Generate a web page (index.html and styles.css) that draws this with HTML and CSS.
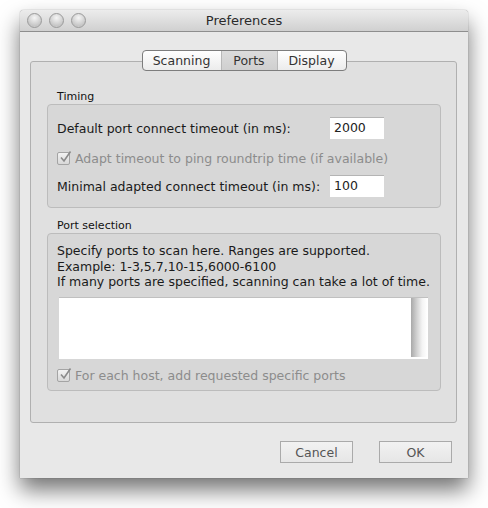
FILE: index.html
```html
<!DOCTYPE html>
<html>
<head>
<meta charset="utf-8">
<link rel="stylesheet" href="styles.css">
</head>
<body>
<div class="window">
  <div class="titlebar">
    <div class="lights">
      <span class="light"></span><span class="light"></span><span class="light"></span>
    </div>
    <div class="title">Preferences</div>
  </div>
  <div class="content">
    <div class="tabs">
      <span class="tab">Scanning</span><span class="tab active">Ports</span><span class="tab">Display</span>
    </div>
    <div class="panel">
      <div class="group-label">Timing</div>
      <div class="group timing">
        <div class="row">
          <span class="label">Default port connect timeout (in ms):</span>
          <span class="field">2000</span>
        </div>
        <div class="row check-row">
          <span class="checkbox"><svg viewBox="0 0 14 14" width="14" height="14"><path d="M3 7.5 L6 11 L12.5 1.5" fill="none" stroke="#8a8a8a" stroke-width="1.6"/></svg></span>
          <span class="dim">Adapt timeout to ping roundtrip time (if available)</span>
        </div>
        <div class="row">
          <span class="label">Minimal adapted connect timeout (in ms):</span>
          <span class="field">100</span>
        </div>
      </div>
      <div class="group-label">Port selection</div>
      <div class="group ports">
        <div class="desc">Specify ports to scan here. Ranges are supported.<br>Example: 1-3,5,7,10-15,6000-6100<br>If many ports are specified, scanning can take a lot of time.</div>
        <div class="textarea"><div class="scroll"></div></div>
        <div class="row check-row">
          <span class="checkbox"><svg viewBox="0 0 14 14" width="14" height="14"><path d="M3 7.5 L6 11 L12.5 1.5" fill="none" stroke="#8a8a8a" stroke-width="1.6"/></svg></span>
          <span class="dim">For each host, add requested specific ports</span>
        </div>
      </div>
    </div>
    <div class="buttons">
      <span class="button">Cancel</span>
      <span class="button">OK</span>
    </div>
  </div>
</div>
</body>
</html>
```
FILE: styles.css
```css
html, body {
  margin: 0;
  padding: 0;
  background: #ffffff;
}
body {
  height: 508px;
  box-sizing: border-box;
  padding: 10px 0 0 20px;
  font-family: "DejaVu Sans", "Liberation Sans", sans-serif;
  font-size: 12.5px;
  color: #1a1a1a;
}
.window {
  width: 448px;
  height: 468px;
  background: #e8e8e8;
  border-radius: 4px 4px 0 0;
  box-shadow: 0 12px 22px rgba(0,0,0,0.55), 0 0 1px rgba(0,0,0,0.6);
  display: flex;
  flex-direction: column;
}
.titlebar {
  height: 21px;
  border-bottom: 1px solid #8e8e8e;
  border-radius: 4px 4px 0 0;
  background: linear-gradient(#ececec, #d0d0d0);
  position: relative;
  display: flex;
  align-items: center;
  justify-content: center;
}
.lights {
  position: absolute;
  left: 7px;
  top: 3px;
  display: flex;
  gap: 7px;
}
.light {
  width: 13px;
  height: 13px;
  border-radius: 50%;
  border: 1px solid #9a9a9a;
  background: radial-gradient(circle at 50% 30%, #f6f6f6, #c6c6c6 70%, #dadada);
  box-sizing: content-box;
}
.title {
  font-size: 13px;
  color: #2a2a2a;
}
.content {
  flex: 1;
  display: flex;
  flex-direction: column;
  padding: 18px 11px 0 10px;
}
.tabs {
  align-self: center;
  margin-left: 1px;
  display: flex;
  height: 19px;
  border: 1px solid #7d7d7d;
  border-radius: 4px;
  background: linear-gradient(#ffffff, #ececec);
  position: relative;
  z-index: 1;
  overflow: hidden;
}
.tab {
  display: flex;
  align-items: center;
  justify-content: center;
  color: #333;
  font-size: 12.5px;
  border-left: 1px solid #b8b8b8;
}
.tab:first-child { border-left: none; width: 78px; }
.tab.active {
  width: 55px;
  background: linear-gradient(#dcdcdc, #cfcfcf);
}
.tab:last-child { width: 68px; }
.panel {
  margin-top: -10px;
  height: 362px;
  box-sizing: border-box;
  border: 1px solid #b0b0b0;
  border-radius: 3px;
  background: #e0e0e0;
  padding: 28px 15px 0 16px;
}
.group-label {
  font-size: 11px;
  line-height: 14px;
  color: #111;
  padding-left: 10px;
  height: 14px;
}
.group {
  border: 1px solid #bcbcbc;
  border-radius: 4px;
  background: #d7d7d7;
  box-sizing: border-box;
  padding: 0 0 0 9px;
}
.timing {
  height: 104px;
  padding-top: 12px;
  margin-bottom: 11px;
  display: flex;
  flex-direction: column;
}
.row {
  display: flex;
  align-items: center;
  height: 22px;
}
.timing .check-row { margin-top: 8px; }
.timing .check-row + .row { margin-top: 6px; }
.label {
  width: 273px;
}
.field {
  width: 54px;
  height: 22px;
  box-sizing: border-box;
  background: #fff;
  border-top: 1px solid #b4b4b4;
  padding: 2px 0 0 4px;
  color: #222;
}
.checkbox {
  width: 13px;
  height: 13px;
  border: 1px solid #a4a4a4;
  border-radius: 2px;
  background: linear-gradient(#f2f2f2, #d8d8d8);
  margin-right: 5px;
  position: relative;
  box-sizing: border-box;
  flex-shrink: 0;
}
.checkbox svg {
  position: absolute;
  left: 0;
  top: -3px;
}
.dim { color: #8c8c8c; }
.ports {
  height: 158px;
  padding-top: 9px;
}
.desc {
  line-height: 15.5px;
}
.textarea {
  margin: 7px 12px 0 2px;
  height: 62px;
  background: #fff;
  border-top: 1px solid #c0c0c0;
  display: flex;
  justify-content: flex-end;
  padding: 0 1px 2px 0;
  box-sizing: border-box;
}
.scroll {
  width: 16px;
  background: linear-gradient(to right, #a9a9a9, #d0d0d0 35%, #f4f4f4 70%, #ffffff);
}
.ports .check-row { margin-top: 6px; }
.buttons {
  display: flex;
  justify-content: flex-end;
  gap: 26px;
  margin-top: 18px;
  padding-right: 5px;
}
.button {
  width: 73px;
  height: 22px;
  box-sizing: border-box;
  border: 1px solid #aaaaaa;
  background: linear-gradient(#f2f2f2, #e6e6e6);
  display: flex;
  align-items: center;
  justify-content: center;
  color: #555;
  font-size: 12.5px;
}
```
